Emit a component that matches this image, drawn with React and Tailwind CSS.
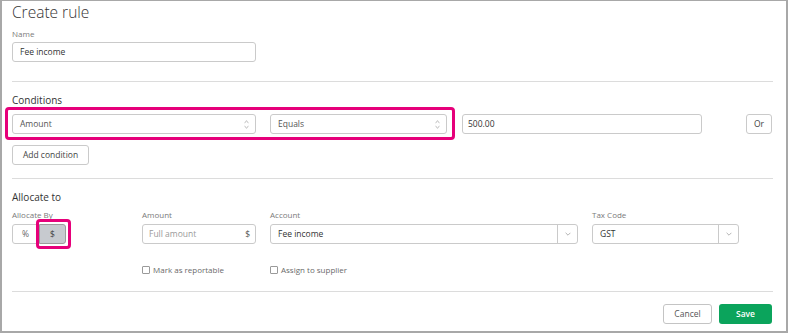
const UpDown = () => (
  <svg width="5" height="11" viewBox="0 0 5 11" className="shrink-0">
    <path d="M0.6 4.2L2.5 1.6L4.4 4.2M0.6 6.8L2.5 9.4L4.4 6.8" stroke="#b3b3b3" strokeWidth="0.8" fill="none" />
  </svg>
)

const Down = () => (
  <svg width="6" height="4" viewBox="0 0 6 4">
    <path d="M0.6 0.8L3 3.2L5.4 0.8" stroke="#a0a0a0" strokeWidth="0.8" fill="none" />
  </svg>
)

// ── small pieces ─────────────────────────────────────────────────────
const Label = ({ children }) => (
  <div className="text-[8px] leading-[10px] text-[#7a7a7a] h-[10px]">{children}</div>
)

const Stepper = ({ value, width }) => (
  <div className={`${width} h-[20px] border border-[#cacaca] rounded-[3px] flex items-center justify-between pl-[7px] pr-[6px] text-[8.5px] text-[#555]`}>
    <span>{value}</span>
    <UpDown />
  </div>
)

const Dropdown = ({ value, width }) => (
  <div className={`${width} h-[20px] border border-[#cacaca] rounded-[3px] flex items-center text-[8.5px] text-[#333]`}>
    <span className="flex-1 pl-[7px]">{value}</span>
    <div className="w-[20px] h-full border-l border-[#cacaca] flex items-center justify-center">
      <Down />
    </div>
  </div>
)

const Check = ({ label }) => (
  <div className="flex items-center gap-[3px]">
    <div className="w-[8px] h-[8px] border border-[#9a9a9a] rounded-[1px] bg-white" />
    <span className="text-[8px] text-[#6a6a6a] leading-[10px]">{label}</span>
  </div>
)

export default function App() {
  return (
    <div className="w-[789px] h-[334px] bg-white font-['Open_Sans',sans-serif]">
      <div className="w-[788px] h-[333px] border-t border-l-2 border-r-2 border-b-2 border-[#a8a8a8] pl-[10px] pr-[13px]">
        {/* Title + name */}
        <h1 className="pt-[1px] h-[21px] text-[15.5px] leading-[20px] font-light text-[#333]">Create rule</h1>
        <div className="mt-[7px]">
          <Label>Name</Label>
        </div>
        <div className="mt-[3px] w-[244px] h-[20px] border border-[#cacaca] rounded-[3px] flex items-center px-[7px] text-[8.5px] text-[#333]">
          Fee income
        </div>

        <div className="mt-[19px] h-px bg-[#dcdcdc]" />

        {/* Conditions */}
        <div className="mt-[12px] text-[10px] leading-[12px] text-[#333]">Conditions</div>
        <div className="mt-[8px] relative flex items-center">
          <Stepper value="Amount" width="w-[244px]" />
          <div className="ml-[14px]">
            <Stepper value="Equals" width="w-[177px]" />
          </div>
          <div className="ml-[15px] w-[240px] h-[20px] border border-[#cacaca] rounded-[3px] flex items-center px-[5px] text-[8.5px] text-[#333]">
            500.00
          </div>
          <div className="ml-auto mr-[1px] w-[26px] h-[20px] border border-[#cacaca] rounded-[3px] flex items-center justify-center text-[8.5px] text-[#444]">
            Or
          </div>
          <div className="absolute -left-[7px] -top-[7px] w-[450px] h-[33px] border-[3px] border-[#e6007a] rounded-[4px] pointer-events-none" />
        </div>
        <div className="mt-[11px] w-[77px] h-[20px] border border-[#cacaca] rounded-[3px] flex items-center justify-center text-[8.5px] text-[#444]">
          Add condition
        </div>

        <div className="mt-[13px] h-px bg-[#dcdcdc]" />

        {/* Allocate to */}
        <div className="mt-[12px] text-[10px] leading-[12px] text-[#333]">Allocate to</div>
        <div className="mt-[7px] flex">
          <div className="w-[130px]">
            <Label>Allocate By</Label>
            <div className="mt-[4px] relative flex h-[20px]">
              <div className="w-[27px] h-full border border-[#cacaca] rounded-l-[3px] flex items-center justify-center text-[8.5px] text-[#666]">
                %
              </div>
              <div className="w-[27px] h-full border border-[#9c9c9c] bg-[#c7cacf] rounded-r-[3px] flex items-center justify-center text-[8.5px] text-[#444]">
                $
              </div>
              <div className="absolute left-[24px] -top-[5px] w-[35px] h-[30px] border-[3px] border-[#e6007a] rounded-[4px] pointer-events-none" />
            </div>
          </div>
          <div className="w-[114px]">
            <Label>Amount</Label>
            <div className="mt-[4px] h-[20px] border border-[#cacaca] rounded-[3px] flex items-center justify-between pl-[6px] pr-[5px] text-[8.5px]">
              <span className="text-[#9a9a9a]">Full amount</span>
              <span className="text-[#555]">$</span>
            </div>
          </div>
          <div className="ml-[14px] w-[308px]">
            <Label>Account</Label>
            <div className="mt-[4px]">
              <Dropdown value="Fee income" width="w-[308px]" />
            </div>
          </div>
          <div className="ml-[14px] w-[147px]">
            <Label>Tax Code</Label>
            <div className="mt-[4px]">
              <Dropdown value="GST" width="w-[147px]" />
            </div>
          </div>
        </div>

        <div className="mt-[20px] h-[12px] flex items-center pl-[130px]">
          <div className="w-[128px]">
            <Check label="Mark as reportable" />
          </div>
          <Check label="Assign to supplier" />
        </div>

        <div className="mt-[15px] h-px bg-[#dcdcdc]" />

        {/* Footer */}
        <div className="mt-[12px] flex justify-end gap-[7px] pr-[1px]">
          <div className="w-[49px] h-[20px] border border-[#c4c4c4] rounded-[3px] flex items-center justify-center text-[8.5px] text-[#555]">
            Cancel
          </div>
          <div className="w-[53px] h-[20px] bg-[#0ba45c] rounded-[3px] flex items-center justify-center text-[8.5px] font-semibold text-white">
            Save
          </div>
        </div>
      </div>
    </div>
  )
}
